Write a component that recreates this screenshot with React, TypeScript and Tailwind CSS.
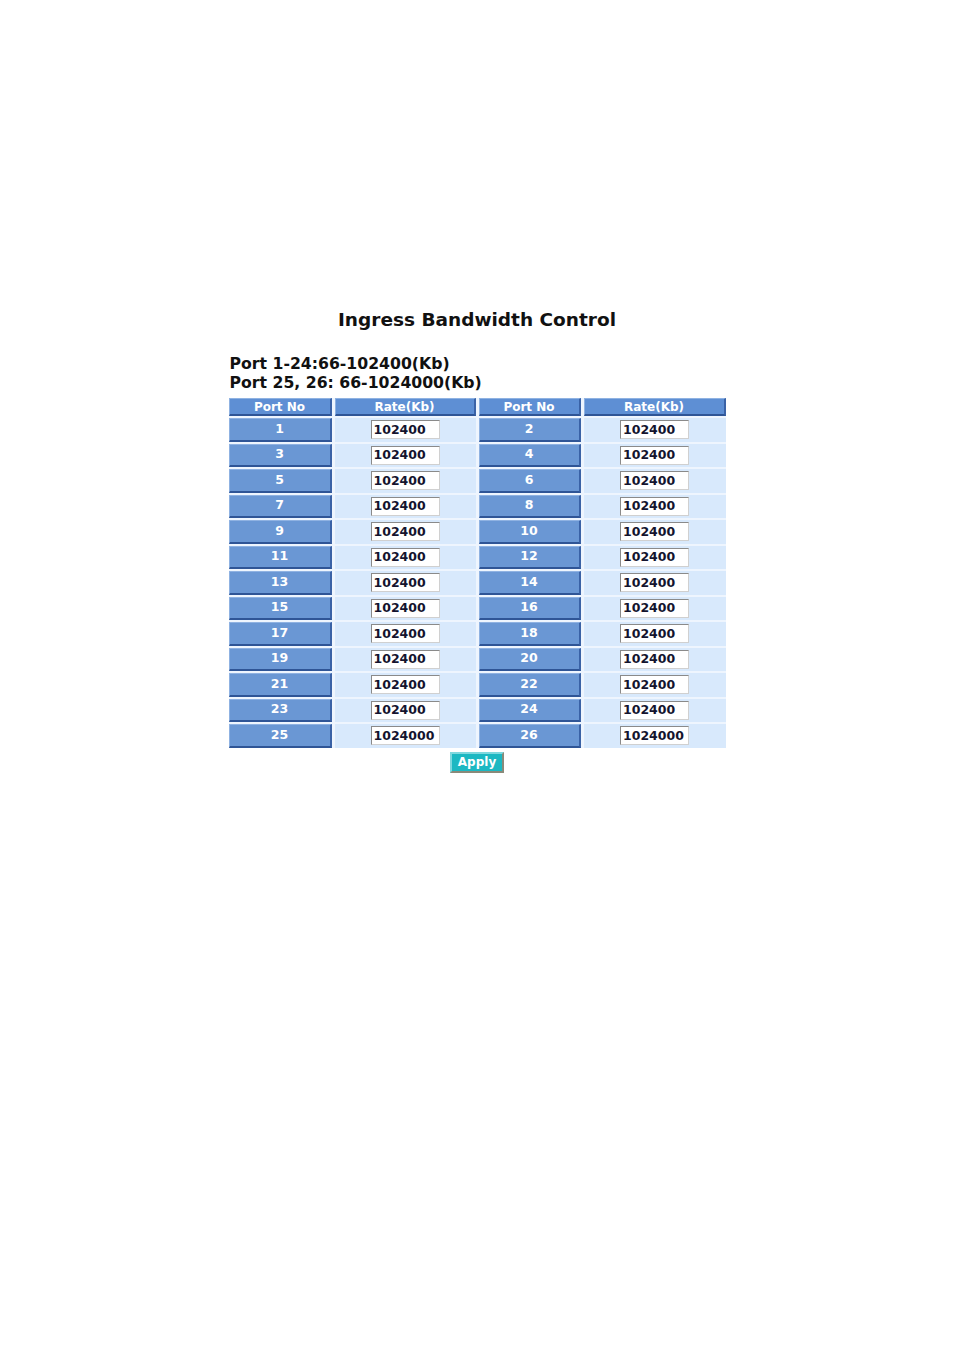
import React from "react";

const rows: [number, string, number, string][] = [];
for (let i = 0; i < 13; i++) {
  const a = i * 2 + 1;
  const b = i * 2 + 2;
  rows.push([a, a === 25 ? "1024000" : "102400", b, b === 26 ? "1024000" : "102400"]);
}

function PortCell({ n }: { n: number }) {
  return (
    <div className="flex items-center justify-center bg-[#6a97d4] border-t border-l border-t-[#8fb2e2] border-l-[#8fb2e2] border-b-2 border-r-2 border-b-[#2f5596] border-r-[#3a62a6] text-white font-bold text-[12.5px]">
      {n}
    </div>
  );
}

function RateCell({ v }: { v: string }) {
  return (
    <div className="flex items-center justify-center bg-[#d8e9fc]">
      <div className="w-[69px] h-[19px] bg-white border border-t-[#8a8a8a] border-l-[#8a8a8a] border-b-[#d0d0d0] border-r-[#d0d0d0] flex items-center pl-[2px] text-[12.5px] font-bold text-[#14142e] leading-none overflow-hidden">
        {v}
      </div>
    </div>
  );
}

function HeaderCell({ t }: { t: string }) {
  return (
    <div className="flex items-center justify-center bg-[#5e8fd4] border-t border-l border-t-[#8fb2e2] border-l-[#8fb2e2] border-b-2 border-r-2 border-b-[#2f5596] border-r-[#3a62a6] text-white font-bold text-[12px] leading-none">
      {t}
    </div>
  );
}

export default function App() {
  return (
    <div
      className="w-[954px] h-[1348px] bg-white text-[#111]"
      style={{ fontFamily: '"DejaVu Sans", Verdana, sans-serif' }}
    >
      <div className="pt-[309px] flex flex-col items-center">
        <div className="text-[18.5px] font-bold leading-[22px]">Ingress Bandwidth Control</div>
        <div className="w-[497px] mt-[23px]">
          <div className="text-[15.7px] font-bold leading-[19px] pl-px">Port 1-24:66-102400(Kb)</div>
          <div className="text-[15.7px] font-bold leading-[19px] pl-px">Port 25, 26: 66-1024000(Kb)</div>
          <div className="mt-[6px] bg-[#eef5fe] grid grid-cols-[103px_141px_102px_142px] gap-x-[3px] gap-y-[2px] grid-rows-[18px]">
            <HeaderCell t="Port No" />
            <HeaderCell t="Rate(Kb)" />
            <HeaderCell t="Port No" />
            <HeaderCell t="Rate(Kb)" />
            {rows.map(([a, va, b, vb]) => (
              <React.Fragment key={a}>
                <div className="h-[23.5px] grid"><PortCell n={a} /></div>
                <RateCell v={va} />
                <div className="h-[23.5px] grid"><PortCell n={b} /></div>
                <RateCell v={vb} />
              </React.Fragment>
            ))}
          </div>
          <div className="flex justify-center mt-[4px]">
            <button className="w-[54px] h-[21px] bg-[#1cb8c2] text-white font-bold text-[12px] leading-none border-2 border-t-[#7fd8de] border-l-[#7fd8de] border-b-[#8a8a7a] border-r-[#8a8a7a] flex items-center justify-center">
              Apply
            </button>
          </div>
        </div>
      </div>
    </div>
  );
}
